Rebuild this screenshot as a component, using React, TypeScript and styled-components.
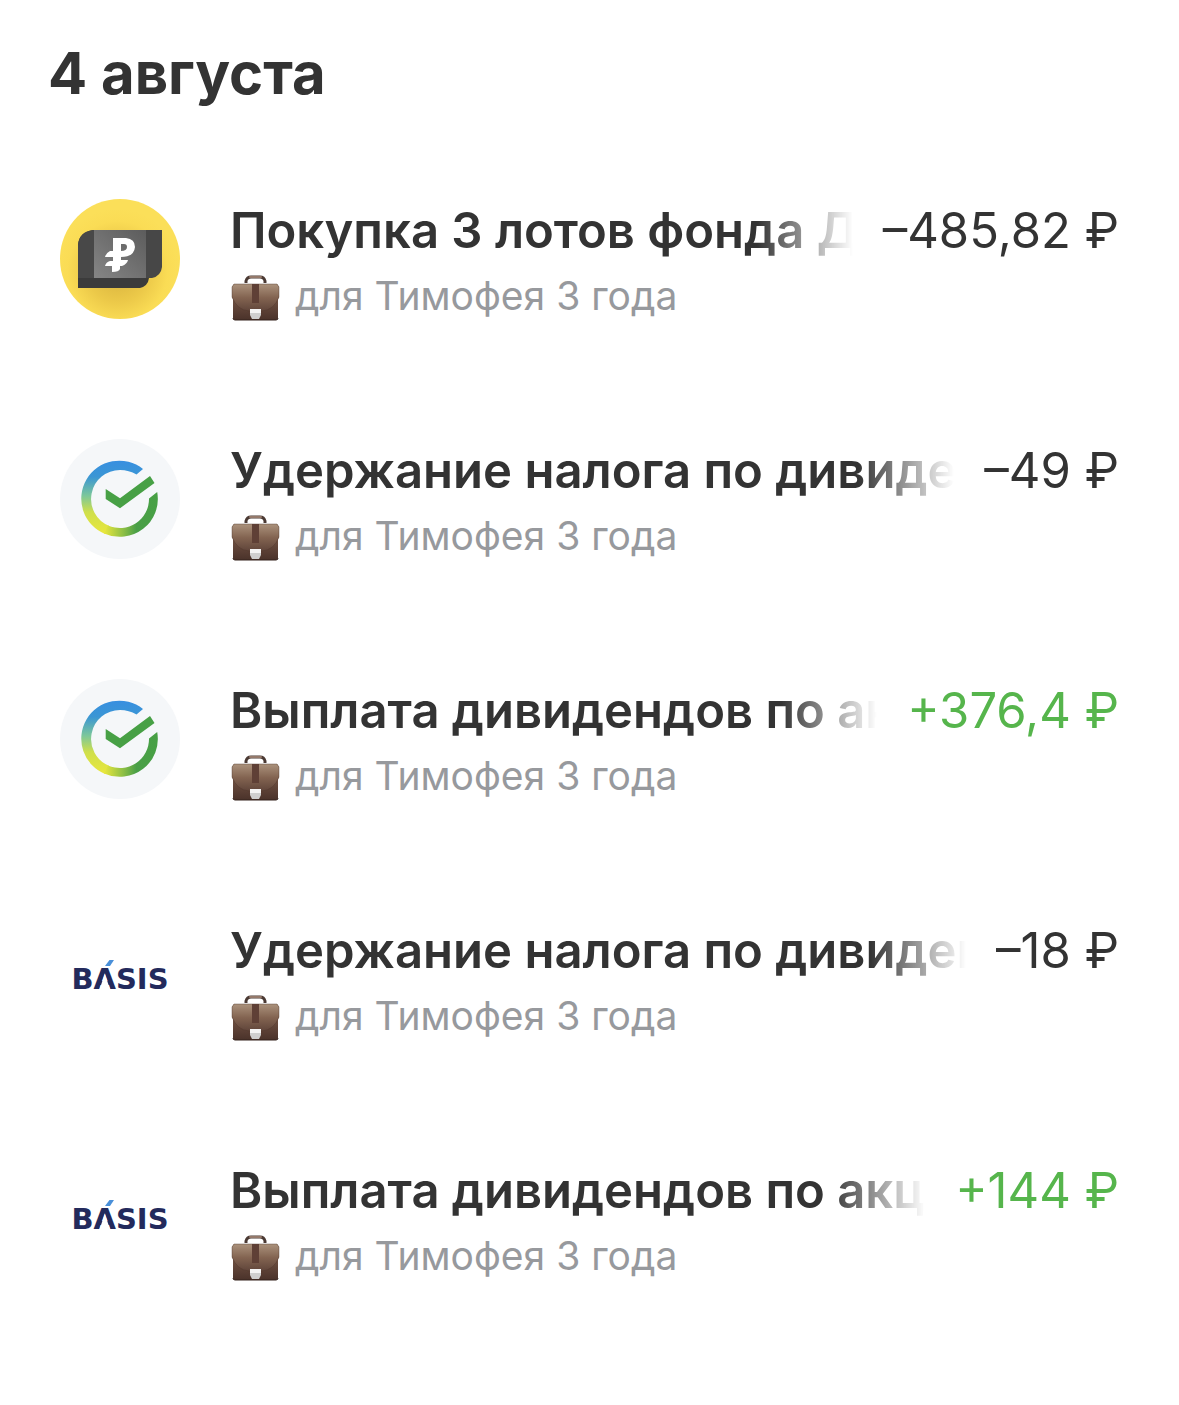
import React from "react";
import styled, { createGlobalStyle } from "styled-components";

const GlobalStyle = createGlobalStyle`
  *, *::before, *::after { box-sizing: border-box; }
  body {
    margin: 0;
    background: #ffffff;
    color: #333333;
    font-family: Inter, "Liberation Sans", sans-serif;
  }
`;

const Page = styled.main`
  padding: 38px 60px 66px;
`;

const DayTitle = styled.h1`
  margin: 0 -12px 31px;
  font-size: 58px;
  line-height: 70px;
  font-weight: 700;
`;

const OperationList = styled.ul`
  list-style: none;
  margin: 0;
  padding: 0;
`;

const Operation = styled.li`
  display: grid;
  grid-template-columns: 120px minmax(0, 1fr);
  column-gap: 50px;
  align-items: center;
  height: 240px;
`;

const Logo = styled.svg`
  display: block;
  width: 120px;
  height: 120px;
`;

const Details = styled.div`
  display: flex;
  flex-direction: column;
  gap: 7px;
  padding-top: 3px;
`;

const Headline = styled.div`
  display: flex;
  align-items: center;
  gap: 30px;
  font-size: 49px;
  line-height: 64px;
`;

const Name = styled.span`
  flex: 1;
  min-width: 0;
  overflow: hidden;
  white-space: nowrap;
  font-weight: 600;
  mask-image: linear-gradient(to left, transparent 0, #000 96px);
`;

const Amount = styled.span<{ $income: boolean }>`
  white-space: nowrap;
  color: ${({ $income }) => ($income ? "#56b54c" : "#333333")};
`;

const Account = styled.div`
  display: flex;
  align-items: center;
  gap: 14px;
  color: #97999d;
  font-size: 39px;
  line-height: 52px;
`;

const CaseIcon = styled.svg`
  flex: none;
  width: 51px;
  height: 50px;
`;

function FundLogo() {
  return (
    <Logo viewBox="0 0 120 120" role="img" aria-label="Фонд">
      <defs>
        <radialGradient id="fund-bg" cx="0.48" cy="0.6" r="0.52">
          <stop offset="0" stopColor="#d6b03c" />
          <stop offset="0.5" stopColor="#ecc949" />
          <stop offset="0.8" stopColor="#fadc55" />
          <stop offset="1" stopColor="#fbdf59" />
        </radialGradient>
        <linearGradient id="fund-note" x1="0" y1="1" x2="1" y2="0">
          <stop offset="0" stopColor="#858585" />
          <stop offset="1" stopColor="#5c5c5c" />
        </linearGradient>
      </defs>
      <circle cx="60" cy="60" r="60" fill="url(#fund-bg)" />
      <path d="M34 31H102V68Q101 77 92 79H34Z" fill="#474747" />
      <path d="M18 46Q19 33 33 31H86V79H89Q88 87 80 89H18Z" fill="#3b3b3b" />
      <path d="M18 46Q19 33 33 31H35V79H18Z" fill="#484848" />
      <rect x="34" y="31" width="52" height="48" fill="url(#fund-note)" />
      <path
        fillRule="evenodd"
        fill="#ffffff"
        d="M53 39H66Q75 40 75 48Q74 58 61 58V61H68Q67 65 62 67H60V70Q59 73 52 73V67H45Q46 63 50 62H53V58H45Q46 54 50 52H53ZM61 45V52Q67 52 67 48Q67 45 64 45Z"
      />
    </Logo>
  );
}

function SberLogo({ id }: { id: string }) {
  return (
    <Logo viewBox="0 0 120 120" role="img" aria-label="Сбер">
      <defs>
        <linearGradient id={id + "-left"} x1="0" y1="0" x2="0" y2="1">
          <stop offset="0" stopColor="#378fe0" />
          <stop offset="0.22" stopColor="#3b96d4" />
          <stop offset="0.48" stopColor="#7cc79a" />
          <stop offset="0.7" stopColor="#cfdf4b" />
          <stop offset="1" stopColor="#e9e73c" />
        </linearGradient>
        <linearGradient id={id + "-low"} x1="0" y1="0" x2="1" y2="0">
          <stop offset="0" stopColor="#e9e73c" />
          <stop offset="0.35" stopColor="#8fc044" />
          <stop offset="0.6" stopColor="#4a9f47" />
          <stop offset="1" stopColor="#47a045" />
        </linearGradient>
      </defs>
      <circle cx="60" cy="60" r="60" fill="#f5f7f9" />
      <path
        d="M83 30A38 38 0 1 0 45 94.900L49 86.800A29 29 0 0 1 60 31Q69 31 76.500 35.500Z"
        fill={"url(#" + id + "-left)"}
      />
      <path
        d="M44 94.400A38 38 0 0 0 97.200 53L89 59.500A29 29 0 0 1 48 86.400Z"
        fill={"url(#" + id + "-low)"}
      />
      <path d="M45.700 50L60 59.300L90 37L94.500 44L60 69.300L45.700 60Z" fill="#47a045" />
    </Logo>
  );
}

const BasisText = styled.text`
  font-family: "DejaVu Sans", sans-serif;
  font-size: 29px;
  font-weight: 700;
`;

function BasisLogo() {
  return (
    <Logo viewBox="0 0 120 120" role="img" aria-label="Basis">
      <BasisText x="60" y="70" textAnchor="middle" fill="#232a5c">
        BASIS
      </BasisText>
      <path d="M44.800 55L50.300 71H39.300Z" fill="#ffffff" />
      <path d="M49.500 41H54L50 47H45Z" fill="#4a90d9" />
    </Logo>
  );
}

function Briefcase({ id }: { id: string }) {
  return (
    <CaseIcon viewBox="0 -2 51 50" aria-hidden="true">
      <defs>
        <linearGradient id={id + "-body"} x1="0" y1="0" x2="0" y2="1">
          <stop offset="0" stopColor="#8a6d5a" />
          <stop offset="0.5" stopColor="#6a4c3e" />
          <stop offset="1" stopColor="#4a322a" />
        </linearGradient>
        <linearGradient id={id + "-flap"} x1="0" y1="0" x2="0" y2="1">
          <stop offset="0" stopColor="#ab927c" />
          <stop offset="0.5" stopColor="#836451" />
          <stop offset="1" stopColor="#60453a" />
        </linearGradient>
      </defs>
      <path d="M16 10V8Q17 4 21 4H30Q34 4 35 8V10" fill="none" stroke="#4b3a34" strokeWidth="3" />
      <path d="M20 4H31" stroke="#94796a" strokeWidth="2" strokeLinecap="round" />
      <path d="M4 11H47L49 14V24L48 26V45Q48 47 46 47H5Q3 47 3 45V26L2 24V14Z" fill={"url(#" + id + "-body)"} />
      <path
        d="M4 11H47L49 14V24Q44 37 32 38H19Q7 37 2 24V14Z"
        fill={"url(#" + id + "-flap)"}
        stroke="#4d352b"
        strokeWidth="1"
        strokeOpacity="0.4"
      />
      <path d="M22 11H29V30H22Z" fill="#5f4036" />
      <path d="M20 36H31V42L29 46H22L20 42Z" fill="#cfcfcf" />
      <path d="M20 36H31V40H20Z" fill="#f4f4f4" />
      <path d="M3 45Q3 47 5 47H46Q48 47 48 45" fill="none" stroke="#35231d" strokeWidth="1" />
    </CaseIcon>
  );
}

type Brand = "fund" | "sber" | "basis";

interface OperationData {
  brand: Brand;
  name: string;
  amount: string;
  income: boolean;
}

const operations: OperationData[] = [
  { brand: "fund", name: "Покупка 3 лотов фонда Д", amount: "–485,82 ₽", income: false },
  { brand: "sber", name: "Удержание налога по дивиде", amount: "–49 ₽", income: false },
  { brand: "sber", name: "Выплата дивидендов по ак", amount: "+376,4 ₽", income: true },
  { brand: "basis", name: "Удержание налога по дивиден", amount: "–18 ₽", income: false },
  { brand: "basis", name: "Выплата дивидендов по акц", amount: "+144 ₽", income: true },
];

function BrandLogo({ brand, id }: { brand: Brand; id: string }) {
  if (brand === "fund") return <FundLogo />;
  if (brand === "sber") return <SberLogo id={id} />;
  return <BasisLogo />;
}

export default function App() {
  return (
    <>
      <GlobalStyle />
      <Page>
        <DayTitle>4 августа</DayTitle>
        <OperationList>
          {operations.map((operation, index) => (
            <Operation key={index}>
              <BrandLogo brand={operation.brand} id={"logo" + index} />
              <Details>
                <Headline>
                  <Name>{operation.name}</Name>
                  <Amount $income={operation.income}>{operation.amount}</Amount>
                </Headline>
                <Account>
                  <Briefcase id={"case" + index} />
                  <span>для Тимофея 3 года</span>
                </Account>
              </Details>
            </Operation>
          ))}
        </OperationList>
      </Page>
    </>
  );
}
